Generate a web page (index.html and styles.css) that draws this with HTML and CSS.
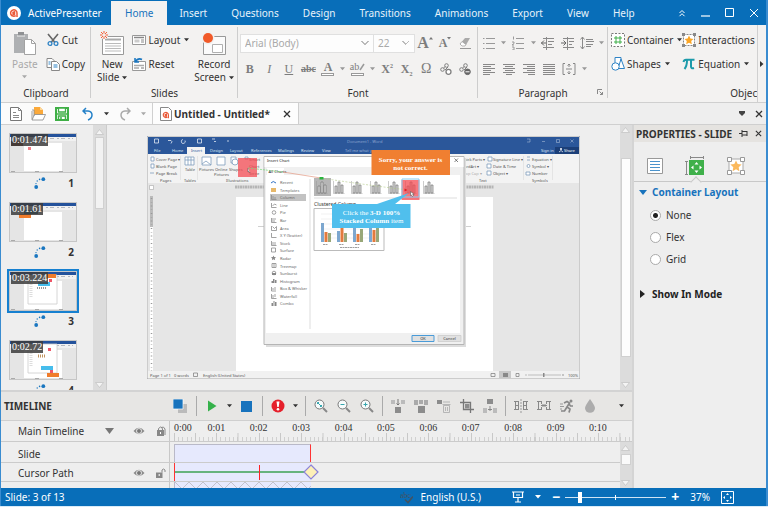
FILE: index.html
```
<!DOCTYPE html>
<html lang="en">
<head>
<meta charset="utf-8">
<title>ActivePresenter</title>
<link rel="stylesheet" href="styles.css">
</head>
<body>
<svg class="defs" aria-hidden="true">
  <symbol id="caret" viewBox="0 0 6 4"><path d="M0 0h6L3 3.500z" fill="currentColor"/></symbol>
  <symbol id="close" viewBox="0 0 8 8"><path d="M1 1l6 6M7 1L1 7" stroke="currentColor" stroke-width="1.300"/></symbol>
  <symbol id="up" viewBox="0 0 11 10"><path d="M1.500 7.500L5.500 2.500l4 5z" fill="#f4f4f4" stroke="#c4c4c4" stroke-width=".8"/></symbol>
  <symbol id="down" viewBox="0 0 11 10"><path d="M1.500 2.500L5.500 7.500l4-5z" fill="#f4f4f4" stroke="#c4c4c4" stroke-width=".8"/></symbol>
  <symbol id="path" viewBox="0 0 12 12"><g fill="#1976c0"><circle cx="2.200" cy="10" r="1.900"/><circle cx="9.300" cy="2.200" r="1.900"/><circle cx="2" cy="6.600" r=".7"/><circle cx="3.200" cy="4" r=".7"/><circle cx="5.600" cy="2.400" r=".8"/></g></symbol>
  <symbol id="eye" viewBox="0 0 12 8"><path d="M.5 4Q6-2.500 11.500 4Q6 10.500.5 4z" fill="#8b8b8b"/><circle cx="6" cy="4" r="2.800" fill="#ededed"/><circle cx="6" cy="4" r="2" fill="#777"/></symbol>
  <symbol id="a-logo" viewBox="0 0 10 10"><path d="M8 9V5a3.200 3.200 0 1 0-1.300 2.600M4 4.500l1.500-.6v2.300l-1.300.3z" fill="none" stroke="#ea5b3a" stroke-width="1.500"/></symbol>
  <symbol id="col-ico" viewBox="0 0 12 14"><path d="M.5 1v12.500h11" fill="none" stroke="#999" stroke-width=".5"/><path d="M2 6h2v7H2zM5 2h2v11H5zM8 5h2v8H8z" fill="#ddd" stroke="#777" stroke-width=".7"/></symbol>
  <symbol id="shot" viewBox="0 0 66 38">
    <path fill="#e5e5e5" d="M0 0h66v38H0z"/><path fill="#24529b" d="M0 0h66v3H0z"/><path fill="#f1f1f1" d="M0 3h66v4H0z"/><path stroke="#b4b8c0" stroke-width="1.200" stroke-dasharray="2 2 4 3" d="M36 4.500h27"/><path fill="#fff" d="M14 9h38v28H14z"/><path stroke="#aaa" stroke-dasharray="4 20" d="M1 37.500h65"/>
  </symbol>
</svg>
<div class="app">
  <header class="titlebar">
    <div class="brand"><svg width="14" height="14" viewBox="0 0 14 14"><circle cx="7" cy="7" r="7" fill="#fff"/><use href="#a-logo" x="2" y="2" width="10" height="10"/></svg><span>ActivePresenter</span></div>
    <nav class="menu">
      <a class="active" href="#home">Home</a><a href="#insert">Insert</a><a href="#questions">Questions</a><a href="#design">Design</a><a href="#transitions">Transitions</a><a href="#animations">Animations</a><a href="#export">Export</a><a href="#view">View</a><a href="#help">Help</a>
    </nav>
    <div class="window-buttons">
      <button aria-label="Collapse ribbon"><svg width="8" height="8" viewBox="0 0 8 8"><path d="M1.500 4L4 1.500 6.500 4M1.500 7.200L4 4.700l2.500 2.500" fill="none" stroke="#fff"/></svg></button>
      <button aria-label="Minimize"><svg width="9" height="9" viewBox="0 0 9 9"><path d="M0 8h9" stroke="#fff" stroke-width="1.200"/></svg></button>
      <button aria-label="Maximize"><svg width="9" height="9" viewBox="0 0 9 9"><path d="M.5.500h8v8h-8z" fill="none" stroke="#fff"/></svg></button>
      <button aria-label="Close"><svg width="10" height="10" viewBox="0 0 10 10"><path d="M1 1l8 8M9 1L1 9" stroke="#fff"/></svg></button>
    </div>
  </header>

  <section class="ribbon">
    <div class="group clipboard">
      <div class="group-body">
        <button class="big off"><svg width="24" height="24" viewBox="0 0 24 24"><path d="M1 3h14v6h-4v13H1z" fill="#aeb0b2"/><path d="M5 1h6v4H5z" fill="#8f9193"/><path d="M4 5h8" stroke="#eee"/><path d="M11.500 8.500h7l4 4v11h-11z" fill="#fff" stroke="#a3a3a3"/><path d="M18.500 8.500v4h4" fill="none" stroke="#a3a3a3"/></svg><span>Paste</span><svg class="caret"><use href="#caret"/></svg></button>
        <div class="stack">
          <button class="cmd"><svg width="14" height="14" viewBox="0 0 14 14"><path d="M2 1l7 8.500M12 1L5 9.500" stroke="#666" stroke-width="1.600"/><circle cx="4" cy="10.500" r="1.900" fill="none" stroke="#2f83c5" stroke-width="1.300"/><circle cx="10" cy="10.500" r="1.900" fill="none" stroke="#2f83c5" stroke-width="1.300"/></svg>Cut</button>
          <button class="cmd"><svg width="14" height="14" viewBox="0 0 14 14"><path d="M1 1.500h5l2 2v7H1z" fill="#fff" stroke="#888"/><path d="M5.500 4.500h5l3 3v6h-8z" fill="#fff" stroke="#888"/><path d="M2.500 5h2M2.500 7h2M7.500 8h4M7.500 10h4" stroke="#2f83c5" stroke-width="1.200"/></svg>Copy</button>
        </div>
      </div>
      <h2>Clipboard</h2>
    </div>
    <div class="group slides">
      <div class="group-body">
        <button class="big"><svg width="24" height="24" viewBox="0 0 24 24"><path d="M2.500 5.500h21v18h-21z" fill="#fff" stroke="#999"/><path d="M5 8.500h16" stroke="#aaa" stroke-width="2"/><path d="M5 12.500h16M5 15h16M5 17.500h16M5 20h16" stroke="#bbb"/><circle cx="4" cy="4" r="4" fill="#f1f0ef"/><path d="M4 0v2.500M4 5.500V8M0 4h2.500M5.500 4H8M1 1l2 2M5 5l2 2M7 1L5 3M3 5L1 7" stroke="#f4613a"/></svg><span>New</span><span>Slide<svg class="caret"><use href="#caret"/></svg></span></button>
        <div class="stack">
          <button class="cmd"><svg width="14" height="14" viewBox="0 0 14 14"><path d="M.5 2.500h13v9H.5z" fill="#fff" stroke="#999"/><path d="M2 4.500h10" stroke="#888" stroke-width="1.500"/><path d="M2.500 6.500h5v3h-5z" fill="#ccc"/><path d="M9 7h3M9 9h3" stroke="#888"/></svg>Layout<svg class="caret"><use href="#caret"/></svg></button>
          <button class="cmd"><svg width="14" height="14" viewBox="0 0 14 14"><path d="M.5 4.500h13v9H.5z" fill="#fff" stroke="#999"/><path d="M2 8.500h10M2 11h5" stroke="#aaa" stroke-width="1.500"/><path d="M9 11h3" stroke="#777"/><path d="M3 1v4h4M3 5Q6 .5 10 2.500" fill="none" stroke="#1976c0" stroke-width="1.500"/></svg>Reset</button>
        </div>
        <button class="big"><svg width="24" height="24" viewBox="0 0 24 24"><path d="M1.500 5.500h22v18h-22z" fill="#fbfbfb" stroke="#999"/><path d="M10.500 13.500h10v8h-10z" fill="#fff" stroke="#b0b0b0"/><circle cx="6" cy="7" r="6.500" fill="#f1f0ef"/><circle cx="6" cy="7" r="5" fill="#f15a29"/></svg><span>Record</span><span>Screen<svg class="caret"><use href="#caret"/></svg></span></button>
      </div>
      <h2>Slides</h2>
    </div>
    <div class="group font">
      <div class="group-body rows">
        <div class="row boxes"><select class="family" aria-label="Font family"><option>Arial (Body)</option></select><select class="size" aria-label="Font size"><option>22</option></select>
          <button class="letter grow" aria-label="Grow font">A<svg width="4" height="3" viewBox="0 0 4 3"><path d="M0 2.500h4L2 0z" fill="#777"/></svg></button>
          <button class="letter" aria-label="Shrink font">A<svg width="4" height="3" viewBox="0 0 4 3"><path d="M0 0h4L2 2.500z" fill="#777"/></svg></button>
          <button aria-label="Clear formatting"><svg width="14" height="14" viewBox="0 0 14 14"><path d="M2 8l5-6h5l-4 7H3z" fill="#aaa"/><path d="M2 8l2-2.500 4 3L7 10H4z" fill="#fff" stroke="#999" stroke-width=".7"/><path d="M2 12.500h11" stroke="#999"/></svg></button>
        </div>
        <div class="row glyphs">
          <button aria-label="Bold"><b>B</b></button><button aria-label="Italic"><i>I</i></button><button aria-label="Underline"><u>U</u></button><button aria-label="Strikethrough"><s>abc</s></button>
          <button class="inked" aria-label="Font color"><b>A</b></button><button class="drop" aria-label="Font colors"><svg class="caret"><use href="#caret"/></svg></button>
          <button class="inked pen" aria-label="Highlight"><span>ab</span><svg width="6" height="8" viewBox="0 0 6 8"><path d="M1 7l4-6" stroke="#999" stroke-width="1.500"/></svg></button><button class="drop" aria-label="Highlight colors"><svg class="caret"><use href="#caret"/></svg></button>
          <button aria-label="Superscript"><b>X<sup>2</sup></b></button><button aria-label="Subscript"><b>X<sub>2</sub></b></button><button class="omega" aria-label="Symbol">Ω</button>
          <button aria-label="Add link"><svg width="14" height="14" viewBox="0 0 14 14" fill="none" stroke="#808080"><circle cx="3.500" cy="7.500" r="1.800"/><circle cx="7.500" cy="3.500" r="1.800"/><path d="M4.500 6l1.800-1.500M6 8l3-3"/><circle cx="9.500" cy="9.800" r="2.500" fill="#fff" stroke-width="1.300"/></svg></button>
          <button aria-label="Remove link"><svg width="14" height="14" viewBox="0 0 14 14" fill="none" stroke="#808080"><circle cx="3.500" cy="7.500" r="1.800"/><circle cx="7.500" cy="3.500" r="1.800"/><path d="M4.500 6l1.800-1.500M6 8l3-3"/><circle cx="9.500" cy="9.800" r="2.800" fill="#666" stroke="#666"/><path d="M7.500 9.800h4" stroke="#fff"/></svg></button>
        </div>
      </div>
      <h2>Font</h2>
    </div>
    <div class="group paragraph">
      <div class="group-body rows">
        <div class="row">
          <button aria-label="Bullets"><svg width="14" height="14" viewBox="0 0 14 14" stroke="#999"><path d="M4 2.500h9M4 7.500h9M4 12.500h9M1 2.500h1.500M1 7.500h1.500M1 12.500h1.500"/></svg></button><button class="drop" aria-label="Bullet styles"><svg class="caret"><use href="#caret"/></svg></button>
          <button aria-label="Numbering"><svg width="14" height="14" viewBox="0 0 14 14" stroke="#999"><path d="M5 2.500h8M5 7.500h8M5 12.500h8M2.500.5v3M1 6h2v1.500l-2 1.500h2M1 11h2v3H1"  fill="none"/></svg></button><button class="drop" aria-label="Number styles"><svg class="caret"><use href="#caret"/></svg></button>
          <button aria-label="Decrease indent"><svg width="14" height="14" viewBox="0 0 14 14" stroke="#8a8a8a"><path d="M2 2.500h11M7 5.500h6M7 8.500h4M2 11.500h11M5.500 1v13" fill="none"/><path d="M0 7h5M3 4.500L.5 7 3 9.500" fill="none" stroke="#666"/></svg></button>
          <button aria-label="Increase indent"><svg width="14" height="14" viewBox="0 0 14 14" stroke="#8a8a8a"><path d="M2 2.500h11M8 5.500h5M8 8.500h3M2 11.500h11M6.500 1v13" fill="none"/><path d="M0 7h5M2.500 4.500L5 7 2.500 9.500" fill="none" stroke="#666"/></svg></button>
          <button aria-label="Line spacing"><svg width="14" height="14" viewBox="0 0 14 14" stroke="#8a8a8a"><path d="M2.500 1v12M.5 3.500l2-2.500 2 2.500M.5 10.500l2 2.500 2-2.500M6 3.500h7M6 5.500h8M6 8.500h7M6 10.500h5" fill="none"/></svg></button><button class="drop" aria-label="Spacing options"><svg class="caret"><use href="#caret"/></svg></button>
        </div>
        <div class="row">
          <button aria-label="Align left"><svg width="12" height="12" viewBox="0 0 12 12" stroke="#888"><path d="M0 1.500h12M0 3.500h8M0 5.500h12M0 7.500h8M0 9.500h12M0 11.500h7"/></svg></button>
          <button aria-label="Center"><svg width="12" height="12" viewBox="0 0 12 12" stroke="#888"><path d="M0 1.500h12M2 3.500h8M0 5.500h12M2 7.500h8M0 9.500h12M3 11.500h6"/></svg></button>
          <button aria-label="Align right"><svg width="12" height="12" viewBox="0 0 12 12" stroke="#888"><path d="M0 1.500h12M4 3.500h8M0 5.500h12M4 7.500h8M0 9.500h12M5 11.500h7"/></svg></button>
          <button aria-label="Justify"><svg width="12" height="12" viewBox="0 0 12 12" stroke="#888"><path d="M0 1.500h12M0 3.500h12M0 5.500h12M0 7.500h12M0 9.500h12M0 11.500h12"/></svg></button>
          <button aria-label="Vertical align"><svg width="14" height="14" viewBox="0 0 14 14" stroke="#888" fill="none"><path d="M3 1.500H1v11h2M11 1.500h2v11h-2M4 7h6" /><path d="M7 2v3M7 9v3M5.500 3.500L7 2l1.500 1.500M5.500 10.500L7 12l1.500-1.500"/></svg></button><button class="drop" aria-label="Vertical options"><svg class="caret"><use href="#caret"/></svg></button>
        </div>
      </div>
      <h2>Paragraph</h2>
      <button class="launcher" aria-label="Paragraph settings"><svg width="6" height="6" viewBox="0 0 6 6"><path d="M.5 5V.5H5M2.500 2.500l3 3M5.500 3v2.500H3" fill="none" stroke="#888"/></svg></button>
    </div>
    <div class="group objects">
      <div class="group-body">
        <div class="stack">
          <button class="cmd"><svg width="14" height="14" viewBox="0 0 14 14"><path d="M.5.500h13v13H.5z" fill="#fff" stroke="#777" stroke-dasharray="2 1.500"/><path d="M5 3v8M9 3v8M3 5h8M3 9h8" stroke="#3fae49"/></svg>Container<svg class="caret"><use href="#caret"/></svg></button>
          <button class="cmd"><svg width="14" height="14" viewBox="0 0 14 14" fill="#fff" stroke="#2f83c5"><path d="M4 .5h6v7H4z"/><path d="M10 2l3.500 9.500H7z"/><circle cx="4.500" cy="9.500" r="3.700"/></svg>Shapes<svg class="caret"><use href="#caret"/></svg></button>
        </div>
        <div class="stack">
          <button class="cmd"><svg width="14" height="14" viewBox="0 0 14 14"><path d="M1.500 1.500h11v11h-11z" fill="#fff" stroke="#888" stroke-dasharray="2 1"/><path d="M0 0h3v3H0zM11 0h3v3h-3zM0 11h3v3H0zM11 11h3v3h-3z" fill="#888"/><path d="M7 2.500l1.400 3 3.100.4-2.300 2.200.6 3.200L7 9.800l-2.800 1.500.6-3.200-2.300-2.200 3.100-.4z" fill="#fba524"/></svg>Interactions<svg class="caret"><use href="#caret"/></svg></button>
          <button class="cmd"><svg width="14" height="14" viewBox="0 0 14 14"><path d="M1.500 5Q2 2.800 4 2.800h8.500M5 3Q5 9 2.500 12M9 3v6.500Q9 12 12 11" fill="none" stroke="#1b9aaa" stroke-width="2"/></svg>Equation<svg class="caret"><use href="#caret"/></svg></button>
        </div>
      </div>
      <h2>Objects</h2>
    </div>
    <button class="ribbon-next" aria-label="Scroll ribbon"><svg width="4" height="6" viewBox="0 0 4 6"><path d="M0 0l3.500 3L0 6z" fill="#333"/></svg></button>
  </section>

  <section class="tabstrip">
    <div class="quick">
      <button aria-label="New"><svg width="12" height="14" viewBox="0 0 12 14"><path d="M.5.500h8l3 3v10H.5z" fill="#fff" stroke="#777"/><path d="M8.500.5v3h3M3 5.500h3M3 8.500h6M3 10.500h6" fill="none" stroke="#888"/></svg></button>
      <button aria-label="Open"><svg width="15" height="15" viewBox="0 0 15 15"><path d="M3 1h6l3 3v5H3z" fill="#fba93a"/><path d="M9 1v3h3" fill="#fdd79a"/><path d="M1 4h2v6M1 13.500V5M3.500 8.500h11l-2.500 5.500H1z" fill="#fff" stroke="#888" stroke-width=".8"/></svg></button>
      <button aria-label="Save"><svg width="14" height="14" viewBox="0 0 14 14"><path d="M1 1h12v12H1z" fill="#fff" stroke="#3faf46" stroke-width="2"/><path d="M3.500 1h7v4h-7zM2 7h10" fill="#fff" stroke="#3faf46" stroke-width="1.300"/><path d="M3.500 13V9h7v4M6 10v3" stroke="#3faf46" fill="none" stroke-width="1.500"/></svg></button>
      <button aria-label="Undo"><svg width="12" height="14" viewBox="0 0 12 14"><path d="M4 1L1 4l3 3M1.500 4H6q4 .5 4 4t-4 5" fill="none" stroke="#2380c8" stroke-width="1.500"/></svg></button>
      <button class="narrow" aria-label="Undo list"><svg class="caret"><use href="#caret"/></svg></button>
      <button aria-label="Redo"><svg width="12" height="14" viewBox="0 0 12 14"><path d="M8 1l3 3-3 3M10.500 4H6Q2 4.500 2 8t4 5" fill="none" stroke="#aaa" stroke-width="1.500"/></svg></button>
      <button class="narrow off" aria-label="Redo list"><svg class="caret"><use href="#caret"/></svg></button>
    </div>
    <div class="doc-tab"><svg width="12" height="14" viewBox="0 0 12 14"><path d="M.5.500h8l3 3v10H.5z" fill="#fff" stroke="#888"/><use href="#a-logo" x="2" y="4" width="8" height="8"/></svg><b>Untitled - Untitled*</b><button aria-label="Close tab"><svg width="8" height="8"><use href="#close"/></svg></button></div>
    <div class="strip-end"><button aria-label="Tab list"><svg width="6" height="5" viewBox="0 0 6 5"><path d="M0 0h6v2L3 5 0 2z" fill="#444"/></svg></button><button aria-label="Close all"><svg width="8" height="8"><use href="#close"/></svg></button></div>
  </section>

  <div class="workspace">
    <div class="left-side">
      <div class="editor">
        <ol class="thumbs">
          <li><div class="thumb"><svg viewBox="0 0 66 38"><use href="#shot"/><path fill="#803b20" d="M1 7h12v5H1z"/><path fill="#f07f86" d="M18 13h3v3h-3z"/></svg><time>0:01.474</time></div><div class="meta"><svg width="12" height="12"><use href="#path"/></svg><b>1</b></div></li>
          <li><div class="thumb"><svg viewBox="0 0 66 38"><use href="#shot"/><path fill="#1d6f8f" d="M14 7h14v4H14z"/><path fill="#f07c2b" d="M9 11h12v4H9z"/></svg><time>0:01.61</time></div><div class="meta"><svg width="12" height="12"><use href="#path"/></svg><b>2</b></div></li>
          <li class="selected"><div class="thumb"><svg viewBox="0 0 66 38"><use href="#shot"/><path fill="#fff" stroke="#ccc" stroke-width=".8" d="M18 3h29v29H18z"/><path stroke="#ddd" stroke-dasharray="1 1" stroke-width="3" d="M21 10v15"/><path fill="#f07c2b" d="M36 2h10v4H36z"/><path fill="#46bdec" d="M28 10h12v4H28z"/><path fill="#ee5566" d="M39 7h3v3h-3z"/><path stroke="#999" stroke-dasharray="1 1" stroke-width="2" d="M27 16h9"/></svg><time>0:03.224</time></div><div class="meta"><svg width="12" height="12"><use href="#path"/></svg><b>3</b></div></li>
          <li><div class="thumb"><svg viewBox="0 0 66 38"><use href="#shot"/><path fill="#fff" stroke="#ccc" stroke-width=".8" d="M18 3h29v29H18z"/><path stroke="#ddd" stroke-dasharray="1 1" stroke-width="3" d="M21 10v15"/><path stroke="#c2945f" stroke-dasharray="1 1" stroke-width="3" d="M28 15h7"/><path fill="#46bdec" d="M31 25h12v4H31z"/><path fill="#ee5566" d="M38 7h3v3h-3zM40 29h3v3h-3z"/><path fill="#f07c2b" d="M37 32h12v4H37z"/></svg><time>0:02.72</time></div><div class="meta"><svg width="12" height="12"><use href="#path"/></svg><b>4</b></div></li>
        </ol>
        <div class="scroll thumbs-scroll"><svg width="11" height="10"><use href="#up"/></svg><span></span><svg class="end" width="11" height="10"><use href="#down"/></svg></div>
        <div class="canvas">
          <svg class="slide" viewBox="147 135 433 243" role="img" aria-label="Slide 3">
            <path fill="#e6e6e6" d="M147 135h433v243H147z"/>
            <path fill="#2b579a" d="M147 135h433v18H147z"/>
            <path fill="#f3f3f3" d="M147 153h433v29H147z"/>
            <path fill="#f3f3f3" d="M187 146h18v7h-18z"/>
            <g fill="none" stroke="#dfe7f3" stroke-width=".8"><path d="M154.500 138h4v4h-4zM168 139.500h3q2 1 0 3M183 138.500a2 2 0 1 0 2 1M197.500 138h4v4h-4zM212 138h3M214 140.500h2M227 140h2"/><path d="M527 138h3v3h-3M542 140.500h3M556.500 138.500h3v3h-3zM570.500 138.500l3 3M573.500 138.500l-3 3" opacity=".5"/></g>
            <g class="w" fill="#dfe7f3"><text x="154" y="151">File</text><text x="172" y="151">Home</text><text x="191" y="151" fill="#2b579a">Insert</text><text x="210" y="151">Design</text><text x="230" y="151">Layout</text><text x="251" y="151">References</text><text x="278" y="151">Mailings</text><text x="301" y="151">Review</text><text x="322" y="151">View</text><text x="345" y="151" fill="#9eb4d8">Tell me what yo</text><text x="347" y="142" fill="#8ba5d0">Document1 - Word</text><text x="541" y="151">Sign in</text></g>
            <path fill="#1b3f78" d="M555 146h24v7h-24z"/><path d="M559 151q2-3 4 0" stroke="#fff" stroke-width=".7" fill="none"/><circle cx="561" cy="148" r="1" fill="#fff"/><text class="w" x="564" y="151" fill="#fff">Share</text>
            <g class="w" fill="#555"><text x="156" y="159.500">Cover Page ▾</text><text x="156" y="167">Blank Page</text><text x="156" y="174">Page Break</text><text x="160" y="181">Pages</text><text x="185" y="170">Table</text><text x="184" y="181">Tables</text><text x="199" y="170">Pictures</text><text x="215" y="170">Online</text><text x="214" y="175">Pictures</text><text x="229" y="170">Shapes</text><text x="249" y="159.500">Smart</text><text x="249" y="167">Chart</text><text x="249" y="174">Scree</text><text x="226" y="181">Illustrations</text><text x="464" y="159.500">uick Parts ▾</text><text x="464" y="167">ordArt ▾</text><text x="464" y="174" fill="#aaa">rop Cap ▾</text><text x="493" y="159.500">Signature Line ▾</text><text x="493" y="167">Date &amp; Time</text><text x="493" y="174">Object ▾</text><text x="532" y="159.500">Equation ▾</text><text x="532" y="167">Symbol ▾</text><text x="532" y="174">Number</text><text x="479" y="181">Text</text><text x="532" y="181">Symbols</text></g>
            <g fill="#fff" stroke="#7e9cbb" stroke-width=".8"><path d="M151 156h3v4h-3zM151 163h3v4h-3zM150 172h4M185 156h9v8h-9zM185 159h9M188 156v8M191 156v8M202 156h9v8h-9zM202 163l4-3 5 4M217 156h8v8h-8zM231 156h5v6h-5zM245 156h3v2h-3zM488 156h4v4h-4zM487 163h4v4h-4zM487 170h4v4h-4zM527 156h3M527 159h3M526 171h4v3h-4z"/><circle cx="235" cy="161" r="3"/><circle cx="528.500" cy="165" r="1.500"/></g>
            <path d="M180.500 155v24M197.500 155v24M523.500 155v24M552.500 155v24" stroke="#ddd" stroke-width=".7"/>
            <path d="M235 186h30M464 186h30" stroke="#b5b5b5" stroke-width="3" stroke-dasharray="2 .5"/>
            <path fill="#fff" d="M236 196h257v174H236z"/>
            <path fill="#fff" d="M150 195h3v175h-3z"/><path fill="#bbb" d="M150 195h3v31h-3z"/><path d="M151.500 197v173" stroke="#999" stroke-width="1.500" stroke-dasharray="1 3 .5 3"/><path d="M149.500 184.500h4v4h-4z" fill="#fff" stroke="#999" stroke-width=".5"/>
            <path d="M258 225.500h6M464 225.500h7" stroke="#bbb" stroke-width=".7"/>
            <path fill="#f1f1f1" d="M147 370h433v8H147z"/><g class="w" fill="#555"><text x="150" y="375.500">Page 1 of 1</text><text x="174" y="375.500">0 words</text><text x="203" y="375.500">English (United States)</text><text x="568" y="375.500">100%</text></g>
            <path d="M193.500 372h4v3.500h-4zM491 372.500h4v3h-4zM516 372.500h3v3h-3z" fill="none" stroke="#777" stroke-width=".7"/><path fill="#c8c8c8" d="M499 370h12v7h-12z"/><path fill="#888" d="M503 372h5v4h-5zM543 372h1.500v4H543z"/><path d="M525 374h2M528 374h33M562 374h2M563 373v2" stroke="#888" stroke-width=".5"/>
            <path d="M147 377.500h433" stroke="#777"/>
            <path fill="#ddd" d="M266 157h200v189H266z"/>
            <path fill="#f0f0f0" stroke="#b5b5b5" d="M264 155.500h200v188H264z"/><path fill="#fff" d="M264.500 156h199v10h-199z"/><path fill="#fff" d="M266 174h194v158H266zM267 167h17v8h-17z"/>
            <g class="w" fill="#222"><text x="267" y="161">Insert Chart</text><text x="268.500" y="172">All Charts</text></g><path d="M454.500 157.500l3.500 3.500M458 157.500l-3.500 3.500" stroke="#333" stroke-width=".6"/>
            <path fill="#c2c2c2" d="M270 193h36v7h-36z"/>
            <g class="w" fill="#666"><text x="280" y="183">Recent</text><text x="280" y="190.500">Templates</text><text x="280" y="198">Column</text><text x="280" y="205.500">Line</text><text x="280" y="213">Pie</text><text x="280" y="220.500">Bar</text><text x="280" y="228.500">Area</text><text x="280" y="236">X Y (Scatter)</text><text x="280" y="243.500">Stock</text><text x="280" y="251">Surface</text><text x="280" y="258.500">Radar</text><text x="280" y="266.500">Treemap</text><text x="280" y="274">Sunburst</text><text x="280" y="281.500">Histogram</text><text x="280" y="289">Box &amp; Whisker</text><text x="280" y="296.500">Waterfall</text><text x="280" y="304">Combo</text></g>
            <path d="M271 182q2-3 5 0" stroke="#2f71c4" fill="none"/><path fill="#e7b86a" d="M271 187h5v4h-5z"/><g fill="none" stroke="#8a8a8a" stroke-width=".8"><path d="M271.500 194v4.500h5M273 198v-3M275 198v-2M271.500 202v4.500h5M272.500 205l2-2 2 1M271.500 217v4.500h5M272 218h4M272 220h3M271.500 225v4.500h5v-4l-2 2-2-2M271.500 232v4.500h5M271.500 240v4.500h5M273 244v-3M275 244v-3M271.500 247h4v4h-4zM272 262.500h4v4h-4zM274 262.500v4M271.500 286v4h4.500M273 287v2M275 286v3M271.500 293v4.500h5M273 294v3M275 293v3"/><circle cx="274" cy="211.500" r="1.800"/><circle cx="274" cy="272" r="1.800"/></g><path fill="#888" d="M272 272h4v2h-4zM271.500 280h1.500v2h-1.500zM273 278h1.500v4H273zM275 279h1.500v3H275zM271.500 302h1.500v3h-1.500zM273.500 300h1v5h-1zM275 301h1.500v4H275zM273.500 254.500l.7 1.500 1.800.2-1.200 1.200.3 1.800-1.600-.9-1.600.9.300-1.800-1.200-1.200 1.800-.2z"/>
            <path d="M310 178v150" stroke="#ddd"/><path fill="#b6b6b6" d="M314 177h17v18h-17z"/>
            <use href="#col-ico" x="316" y="179" width="12" height="14"/><use href="#col-ico" x="333" y="179" width="12" height="14"/><use href="#col-ico" x="351" y="179" width="12" height="14"/><use href="#col-ico" x="370" y="179" width="12" height="14"/><use href="#col-ico" x="388" y="179" width="12" height="14"/><use href="#col-ico" x="405" y="179" width="12" height="14"/><use href="#col-ico" x="423" y="179" width="12" height="14"/>
            <path d="M314 197h143" stroke="#ddd"/><text class="clustered" x="314" y="204.500">Clustered Column</text>
            <path fill="#fff" stroke="#bbb" d="M314 207.500h70v42h-70z"/>
            <path d="M321 213h58M321 218h58M321 223h58M321 228h58M321 233h58M321 237h58" stroke="#e2e2e2" stroke-width=".5"/>
            <path fill="#7da7cf" d="M321 222h3v19h-3zM337 230h3v11h-3zM353 226h3v15h-3zM369 221h3v20h-3z"/><path fill="#e37a3d" d="M324.500 231h3v10h-3zM340.500 226h3v15h-3zM356.500 233h3v8h-3zM372.500 229h3v12h-3z"/><path fill="#98a778" d="M328 232h3v9h-3zM344 232h3v9h-3zM360 228h3v13h-3zM376 225h3v16h-3z"/><path d="M323 243.500h5M339 243.500h5M355 243.500h5M371 243.500h5M340 246.500h19" stroke="#888" stroke-width=".8" stroke-dasharray="2 .5"/>
            <path fill="#f44b53" fill-opacity=".75" d="M238 157h19v19h-19zM401.500 179h18v20h-18z"/><path fill="none" stroke="#86cdf3" d="M402 178h17v18h-17z"/>
            <path d="M248 167l35 4" stroke="#78d878" stroke-width=".7" stroke-dasharray="2 1"/><path d="M283 171l38 6" stroke="#e49a82" stroke-width=".7"/><path d="M321 177q45 7 87 12" fill="none" stroke="#b0c884" stroke-width=".6" stroke-dasharray="2 1.500"/><path fill="#2ab53c" d="M319.500 176h4v2.500h-4z"/><path fill="#e21a25" d="M404.500 187.500l3 1.500-3 1.500z"/>
            <path d="M248 167v4l1 -.5 1 1.500M410.500 190.500v4l1-.5 1 1.500 1-1-.8-1.200h1.500z" fill="#fff" stroke="#555" stroke-width=".6"/>
            <path fill="#50bfed" d="M332 203h45l32-11-14 11h15.500v24H332z"/><path fill="#f07f31" d="M371.500 149h78.500v25h-78.500z"/>
            <g class="callout"><text x="410.500" y="160.500">Sorry, your answer is</text><text x="410.500" y="168.500">not correct.</text><text x="371.500" y="213.500"><tspan font-weight="400">Click the</tspan> 3-D 100%</text><text x="371.500" y="221.500">Stacked Column <tspan font-weight="400">item</tspan></text></g>
            <g class="w" fill="#333" text-anchor="middle"><path fill="#e1e1e1" stroke="#4a9bd8" d="M412 334.500h22v6h-22z"/><text x="423" y="339">OK</text><path fill="#e1e1e1" stroke="#c9c9c9" stroke-width=".7" d="M438 334.500h23v6h-23z"/><text x="449.500" y="339">Cancel</text></g>
            <path fill="none" stroke="#ccc" d="M147.500 135.500h432v242h-432z"/>
          </svg>
        </div>
        <div class="scroll canvas-scroll"><svg width="11" height="10"><use href="#up"/></svg><span></span><svg class="end" width="11" height="10"><use href="#down"/></svg></div>
      </div>

      <section class="timeline">
        <div class="tools">
          <h2>TIMELINE</h2>
          <button class="layers" aria-label="Layers"><svg width="14" height="14" viewBox="0 0 14 14"><path fill="#bbb" d="M5 5h9v9H5z"/><path fill="#1873bd" stroke="#fff" stroke-width=".7" d="M0 0h10v10H0z"/></svg></button><hr>
          <button aria-label="Play"><svg width="10" height="12" viewBox="0 0 10 12"><path d="M1 .5L9.500 6 1 11.500z" fill="#35b14a"/></svg></button><button class="narrow" aria-label="Play options"><svg class="caret"><use href="#caret"/></svg></button><button aria-label="Stop"><svg width="11" height="11"><path fill="#1873bd" d="M0 0h11v11H0z"/></svg></button><hr>
          <button aria-label="Record"><svg width="14" height="14" viewBox="0 0 14 14"><circle cx="7" cy="7" r="6.500" fill="#e5202b"/><path d="M5.500 2.500h3L7.700 8H6.300z" fill="#fff"/><circle cx="7" cy="10.200" r="1.300" fill="#fff"/></svg></button><button class="narrow" aria-label="Record options"><svg class="caret"><use href="#caret"/></svg></button><hr>
          <button aria-label="Zoom to fit"><svg width="14" height="14" viewBox="0 0 14 14"><circle cx="5.500" cy="5.500" r="4.500" fill="#f7fbfb" stroke="#777"/><path d="M9 9l4 4" stroke="#888" stroke-width="2"/><path d="M3.500 3.500l4 4M3.500 5V3.500H5M6 7.500h1.500V6" stroke="#35a5ad" fill="none"/></svg></button><button aria-label="Zoom out"><svg width="14" height="14" viewBox="0 0 14 14"><circle cx="5.500" cy="5.500" r="4.500" fill="#f7fbfb" stroke="#777"/><path d="M9 9l4 4" stroke="#888" stroke-width="2"/><path d="M3.500 5.500h4" stroke="#35a5ad"/></svg></button><button aria-label="Zoom in"><svg width="14" height="14" viewBox="0 0 14 14"><circle cx="5.500" cy="5.500" r="4.500" fill="#f7fbfb" stroke="#777"/><path d="M9 9l4 4" stroke="#888" stroke-width="2"/><path d="M3.500 5.500h4M5.500 3.500v4" stroke="#35a5ad"/></svg></button><hr>
          <button aria-label="Insert time"><svg width="14" height="14" viewBox="0 0 14 14"><path fill="#bbb" d="M0 1h4v4H0zM10 1h4v4h-4z"/><path d="M7 0v6M5.500 4.500L7 6l1.500-1.500" stroke="#777" fill="none"/><path fill="#8c8c8c" d="M4 8h6v6H4z"/></svg></button><button aria-label="Insert range"><svg width="14" height="14" viewBox="0 0 14 14"><path fill="#aaa" d="M0 1h4v5H0zM5 1h4v4H5zM10 1h4v5h-4z"/><path fill="#8c8c8c" d="M4 7h7v7H4z"/></svg></button><button aria-label="Delete range"><svg width="14" height="14" viewBox="0 0 14 14"><path fill="#8c8c8c" d="M0 1h5v4H0z"/><path d="M6 3h7M6.500 6.500h6v7h-6zM5.500 5.500h8M8.500 8v4M10.500 8v4" stroke="#aaa" fill="none" stroke-width=".8"/></svg></button><button aria-label="Crop"><svg width="14" height="14" viewBox="0 0 14 14"><path d="M3.500 0v10.500H14M0 3.500h10.500V14" fill="none" stroke="#777" stroke-width="1.300"/><path fill="#8c8c8c" d="M5 5h4.500v4.500H5z"/></svg></button><button aria-label="Insert frame"><svg width="14" height="14" viewBox="0 0 14 14"><path fill="#8c8c8c" d="M4 0h6v5H4z"/><path fill="#bbb" d="M0 9h4v5H0zM10 9h4v5h-4z"/><path d="M5 10.500h4M7 7v5" stroke="#888"/></svg></button><hr>
          <button aria-label="Split"><svg width="14" height="14" viewBox="0 0 14 14"><path d="M0 2.500h5M1.500 2v9M4.500 2v9M0 10.500h5M2 6.500h2M9 2.500h5M9.500 2v9M12.500 2v9M9 10.500h5M10 6.500h2" stroke="#888"/><path d="M7 0v14" stroke="#999" stroke-dasharray="2 1"/></svg></button><button aria-label="Join"><svg width="14" height="14" viewBox="0 0 14 14"><path d="M0 2.500h5M1.500 2v9M0 10.500h5M4.500 2v3M4.500 8v3M9 2.500h5M12.500 2v9M9 10.500h5M9.500 2v3M9.500 8v3M4 6.500h6M6 5v3M8 5v3" stroke="#888"/></svg></button><button aria-label="Speed"><svg width="14" height="14" viewBox="0 0 14 14"><circle cx="11" cy="2" r="1.500" fill="#888"/><path d="M4 4l3-1.500 2.500 1.500-2.500 4 3 2-1 3.500M7 8L4.500 12H1M9 5l1.500 2H13" fill="none" stroke="#888" stroke-width="1.700"/><path d="M0 5h3M0 7.500h4M0 10h2" stroke="#999"/></svg></button><button aria-label="Blur"><svg width="10" height="14" viewBox="0 0 10 14"><path d="M5 0Q10 7 10 9a5 4.800 0 0 1-10 0Q0 7 5 0z" fill="#acacac"/></svg></button>
          <button class="narrow more" aria-label="More tools"><svg class="caret"><use href="#caret"/></svg></button>
        </div>
        <div class="tracks">
          <div class="track ruler-row"><div class="name"><span>Main Timeline</span><svg class="pick" width="9" height="6" viewBox="0 0 9 6"><path d="M0 0h9L4.500 6z" fill="#777"/></svg><svg width="12" height="8"><use href="#eye"/></svg><svg width="10" height="10" viewBox="0 0 10 10"><path d="M2.500 4V2.500Q4.500-.5 6.500 2.500V4M5 1.500q3-1.500 4 1.500v6" fill="none" stroke="#888"/><path d="M1 4h7v6H1z" fill="#888"/><path d="M4.500 6v2" stroke="#fff"/></svg></div>
            <div class="ruler"><span>0:00</span><span>0:01</span><span>0:02</span><span>0:03</span><span>0:04</span><span>0:05</span><span>0:06</span><span>0:07</span><span>0:08</span><span>0:09</span><span>0:10</span></div></div>
          <div class="track slide-row"><div class="name"><span>Slide</span></div><div class="lane"><div class="clip slide-clip"></div></div></div>
          <div class="track"><div class="name"><span>Cursor Path</span><svg width="12" height="8"><use href="#eye"/></svg><svg width="10" height="10" viewBox="0 0 10 10"><path d="M0 4.500h6.500V10H0z" fill="#888"/><path d="M6 4.500V2q1.500-2 3 0v2" fill="none" stroke="#888"/><path d="M3.200 6v2" stroke="#fff"/></svg></div><div class="lane"><div class="clip path-clip"><i></i></div><svg class="diamond" width="16" height="16" viewBox="0 0 16 16"><path d="M8 1l7 7-7 7-7-7z" fill="#fdf0b8" stroke="#8b83d9" stroke-width="1.200"/></svg></div></div>
          <div class="track last"><div class="name"></div><div class="lane"><div class="clip"><svg width="100%" height="6"><defs><pattern id="cross" width="14" height="14" patternUnits="userSpaceOnUse"><path d="M0 0l14 14M14 0L0 14" stroke="#c2c2cc"/></pattern></defs><path d="M0 0h456v6H0z" fill="url(#cross)"/></svg></div></div></div>
          <div class="scroll track-scroll"><svg width="11" height="12"><use href="#up"/></svg><span></span><svg class="end" width="11" height="10"><use href="#down"/></svg></div>
        </div>
      </section>
    </div>

    <aside class="properties">
      <header><h2>PROPERTIES - SLIDE</h2><button aria-label="Pin"><svg width="9" height="7" viewBox="0 0 9 7"><path d="M0 3.500h3M3 0v7M3 1.500h5M3 5h5M8 1v5" stroke="#333" fill="none"/></svg></button><button aria-label="Close panel"><svg width="7" height="7"><use href="#close"/></svg></button></header>
      <div class="prop-tabs">
        <button aria-label="Properties"><svg width="16" height="16" viewBox="0 0 16 16"><path d="M.5.500h15v15H.5z" fill="#fff" stroke="#999"/><path d="M3 3.500h10M3 6.500h10M3 9.500h10M3 12.500h10" stroke="#4b93cc"/></svg></button>
        <button class="current" aria-label="Size and layout"><svg width="20" height="20" viewBox="0 0 20 20"><path d="M5 1.500h14M5.500 0v3M18.500 0v3M1.500 5v13M0 5.500h3M0 18.500h3" stroke="#888"/><path fill="#3fb04a" d="M4 4h15v15H4z"/><path d="M11.500 6l2 2.500h-4zM11.500 17l2-2.500h-4zM6 11.500l2.500 2v-4zM17 11.500l-2.500 2v-4z" fill="#fff"/></svg></button>
        <button aria-label="Interactivity"><svg width="18" height="18" viewBox="0 0 18 18"><path d="M2 2h14v14H2z" fill="#fff" stroke="#aaa"/><path d="M.5.500h4v4h-4zM13.500.500h4v4h-4zM.5 13.500h4v4h-4zM13.500 13.500h4v4h-4z" fill="#fff" stroke="#999"/><path d="M9 3.500l1.700 3.600 3.900.5-2.900 2.700.7 3.900L9 12.300l-3.400 1.900.7-3.900-2.900-2.700 3.900-.5z" fill="#fbb95d"/></svg></button>
      </div>
      <details class="section" open>
        <summary><svg width="8" height="5" viewBox="0 0 8 5"><path d="M0 0h8L4 5z" fill="#1873bd"/></svg>Container Layout</summary>
        <label><input type="radio" name="layout" checked>None</label>
        <label><input type="radio" name="layout">Flex</label>
        <label><input type="radio" name="layout">Grid</label>
      </details>
      <details class="section mode">
        <summary><svg width="8" height="8" viewBox="0 0 8 8"><path d="M1 0v8l5-4z" fill="#222"/></svg>Show In Mode</summary>
      </details>
    </aside>
  </div>

  <footer class="status">
    <span>Slide: 3 of 13</span>
    <div class="status-tools">
      <button class="language"><svg width="13" height="13" viewBox="0 0 13 13"><text x="0" y="7" font-size="8">abc</text><path d="M5 8.500l3 3 5-6" fill="none" stroke="#44535f" stroke-width="1.600"/></svg>English (U.S.)</button>
      <button aria-label="Preview"><svg width="12" height="12" viewBox="0 0 12 12"><path d="M0 1h12M1.500 1v5.500h9V1M6 7v4M3 11h6M4 4h4" fill="none" stroke="#fff" stroke-width="1.200"/></svg></button>
      <button aria-label="Preview options"><svg width="6" height="4"><use href="#caret"/></svg></button>
      <div class="zoom"><button aria-label="Zoom out">−</button><input type="range" min="0" max="100" value="13" aria-label="Zoom"><button aria-label="Zoom in">+</button></div>
      <span class="percent">37%</span>
      <button aria-label="Fit to window"><svg width="13" height="13" viewBox="0 0 13 13"><path d="M.5.500h12v12H.5z" fill="none" stroke="#fff"/><path d="M6.500 2l1.500 2H5zM6.500 11L8 9H5zM2 6.500L4 8V5zM11 6.500L9 8V5z" fill="#fff"/></svg></button>
    </div>
  </footer>
</div>
</body>
</html>
```
FILE: styles.css
```
* { box-sizing: border-box; }
html, body { height: 100%; }
body { margin: 0; background: #d9ebf8; font: 10px/14px "Noto Sans", sans-serif; color: #333; }
h2, ol { margin: 0; padding: 0; font-size: 10px; list-style: none; }
button { display: flex; align-items: center; justify-content: center; padding: 0; border: 0; background: none; font: inherit; color: inherit; }
svg { display: block; flex: none; }
hr { width: 1px; height: 20px; margin: 0 3px 0 4px; border: 0; background: #aaa; }
.defs { position: absolute; width: 0; height: 0; }
.caret { display: inline-block; width: 5px; height: 4px; color: #333; }
.off, .off .caret { color: #a9a9a9; }

.app { display: flex; flex-direction: column; height: calc(100vh - 1px); overflow: hidden; border: solid #3a8cd0; border-width: 0 2px 0 1px; background: #eee; }

.titlebar { display: flex; flex: none; height: 25px; background: #086eb9; color: #fff; }
.brand { display: flex; align-items: center; gap: 7px; width: 110px; padding-left: 6px; }
.menu { display: flex; flex: 1; padding-top: 1px; }
.menu a { display: flex; align-items: center; padding: 0 12px; color: #e7f2fa; text-decoration: none; }
.menu .active { padding: 0 14px; background: #f3f2f1; color: #1873bd; }
.window-buttons { display: flex; align-items: center; gap: 15px; padding-right: 7px; }

.ribbon { display: grid; flex: none; grid-template-columns: 90px 147px 240px 130px 1fr 9px; height: 78px; border-bottom: 1px solid #cfcfcf; background: #f3f2f1; }
.group { position: relative; display: flex; flex-direction: column; justify-content: space-between; min-width: 0; padding: 6px 0 2px; overflow: hidden; }
.group:not(.objects)::after { content: ""; position: absolute; right: 0; top: 2px; bottom: 4px; width: 1px; background: #cdcdcd; }
.group h2 { font-weight: 400; text-align: center; }
.group-body { display: flex; align-items: flex-start; }
.big { flex-direction: column; line-height: 13px; }
.big > span { display: flex; align-items: center; gap: 3px; }
.big > svg:first-child { margin-bottom: 3px; }
.big > .caret { margin-top: 4px; }
.stack { display: flex; flex-direction: column; gap: 8px; padding-top: 1px; }
.cmd { gap: 2px; height: 16px; white-space: nowrap; justify-content: flex-start; }
.cmd .caret { margin-left: 2px; }
.clipboard .group-body { gap: 8px; padding-left: 11px; }
.slides .group-body { gap: 5px; padding-left: 6px; }
.slides .stack { flex: 1; }
.slides .big:last-child { padding-right: 5px; }
.rows { flex-direction: column; gap: 4px; padding-top: 1px; }
.row { display: flex; align-items: center; align-self: stretch; height: 22px; }
.row .caret { color: #999; }
.row button { flex: 1; }
.row button.drop { flex: 0 0 10px; }
.font .group-body { padding-left: 2px; padding-right: 3px; }
.letter { align-items: flex-start; font: 700 12px/20px "Liberation Serif", serif; color: #7d7d7d; }
.letter svg { margin-top: 4px; }
.grow { font-size: 16px; }
select { appearance: none; height: 19px; margin: 0; padding: 0 4px; border: 1px solid #e0e0e0; border-radius: 0; color: #a9a9a9; font: inherit; background: linear-gradient(45deg, transparent 50%, #bbb 50% 66%, transparent 66%) right 8px center / 4px 4px no-repeat, linear-gradient(-45deg, transparent 50%, #bbb 50% 66%, transparent 66%) right 4px center / 4px 4px no-repeat, #fdfdfd; opacity: 1; }
.family { width: 134px; }
.size { width: 42px; margin-left: -1px; }
.glyphs { font: 12px/16px "Liberation Serif", serif; color: #7d7d7d; }
.glyphs s { font-size: 10px; font-weight: 700; }
.glyphs sup, .glyphs sub { font-size: 6px; line-height: 0; }
.glyphs .omega { font-size: 14px; }
.glyphs .inked { height: 14px; padding-bottom: 4px; background: linear-gradient(#fff, #fff) 50% 12px / 11px 1px no-repeat, linear-gradient(#999, #999) 50% 100% / 13px 3px no-repeat; }
.glyphs .pen { font-size: 10px; }
.paragraph .group-body { padding: 1px 1px 0; }
.paragraph .row:last-child button:not(.drop) { flex: 0 0 20px; }
.launcher { position: absolute; right: 5px; bottom: 7px; }
.objects .group-body { padding-left: 3px; }
.objects h2 { width: 280px; }
.ribbon-next { border-left: 1px solid #d0d0d0; }

.tabstrip { display: flex; flex: none; height: 22px; border-bottom: 1px solid #cfcfcf; background: #eee; }
.quick { display: flex; align-items: center; width: 152px; padding-left: 3px; background: #fbfbfb; border-right: 1px solid #d0d0d0; }
.quick button { width: 23px; }
.quick button:nth-child(4) { margin-left: 3px; }
.quick .narrow { width: 14px; }
.doc-tab { display: flex; align-items: center; gap: 2px; width: 146px; padding: 0 7px; background: #fdfdfd; border-right: 1px solid #cfcfcf; white-space: nowrap; }
.doc-tab button { margin-left: auto; }
.strip-end { display: flex; align-items: center; gap: 10px; margin-left: auto; padding-right: 3px; }

.workspace { display: flex; flex: 1; min-height: 0; }
.left-side { display: flex; flex: 1; flex-direction: column; min-width: 0; }
.editor { display: flex; flex: 1; min-height: 0; border-bottom: 2px solid #d3d3d3; }
.thumbs { flex: none; width: 92px; padding: 8px 0 0 8px; overflow: hidden; }
.thumbs li { width: 68px; height: 69px; }
.thumb { position: relative; height: 40px; border: 1px solid #c6c6c6; }
.thumb svg { width: 100%; height: 38px; }
.selected .thumb { outline: 2px solid #1680d0; }
.thumb time { position: absolute; left: 1px; top: 0; padding: 0 1px; background: rgba(60, 60, 60, .85); color: #fff; font: 10px/12px "Liberation Serif", serif; }
.meta { display: flex; justify-content: space-between; align-items: center; padding: 3px 3px 0 25px; }
.scroll { display: flex; flex: none; flex-direction: column; width: 12px; background: #dcdcdc; }
.scroll span { margin: 0 1px; border: 1px solid #d0d0d0; background: #f2f2f2; }
.scroll .end { margin-top: auto; }
.thumbs-scroll { width: 14px; padding: 2px 1px 0; border-right: 1px solid #ccc; }
.thumbs-scroll span { height: 72px; }
.canvas { display: flex; flex: 1; align-items: center; justify-content: center; min-width: 0; padding: 0 40px; }
.slide { width: 100%; max-height: 100%; }
.w { font: 4px "Noto Sans", sans-serif; }
.clustered { font: 5px "Noto Sans", sans-serif; fill: #333; }
.callout { font: 700 7px "Liberation Serif", serif; fill: #fff; text-anchor: middle; }
.canvas-scroll span { flex: 1; margin-top: 23px; margin-bottom: 23px; background: #fdfdfd; }

.timeline { position: relative; flex: none; }
.tools { display: flex; align-items: center; height: 29px; padding-right: 5px; background: #e7e6e4; border-bottom: 1px solid #cfcfcf; }
.tools h2 { width: 167px; padding-left: 3px; }
.tools button { width: 23px; }
.tools .layers { width: 24px; }
.tools .narrow { width: 12px; }
.tools .more { margin-left: auto; }
.tracks { position: relative; }
.track { display: flex; height: 19px; border-bottom: 1px solid #cbcbcb; }
.name { display: flex; flex: none; align-items: center; gap: 11px; width: 169px; padding: 2px 3px 0 17px; border-right: 1px solid #c8c8c8; }
.name span { margin-right: auto; }
.ruler-row, .slide-row { height: 21px; }
.ruler-row .name { padding-top: 0; }
.slide-row .name { padding-top: 4px; }
.pick { margin-right: 8px; }
.ruler { display: grid; flex: 1; grid-template-columns: repeat(10, 5fr) 4fr; margin-left: 4px; font: 10px/14px "Liberation Serif", serif; }
.ruler span { display: flex; height: 20px; background: linear-gradient(90deg, #c8c8c8 1px, transparent 1px) 0 100% / 50% 8px repeat-x, repeating-linear-gradient(90deg, #d0d0d0 0 1px, transparent 1px 10%) 0 100% / 100% 4px no-repeat; text-indent: -9px; }
.ruler span:first-child { text-indent: 0; }
.ruler span:last-child { background: linear-gradient(90deg, #c8c8c8 1px, transparent 1px) 0 100% / 63% 8px repeat-x, repeating-linear-gradient(90deg, #d0d0d0 0 1px, transparent 1px 13%) 0 100% / 100% 4px no-repeat; }
.lane { position: relative; flex: 1; margin-left: 4px; }
.clip { width: 30%; height: 100%; background: #e6e9fd; border-left: 1px solid #b9b9c8; }
.slide-clip { margin-top: 2px; height: calc(100% - 2px); border-top: 1px solid #b9b9c8; border-right: 1px solid #f33; }
.path-clip { display: flex; align-items: center; background: linear-gradient(#67b37e, #67b37e) 0 50% / 100% 2px no-repeat, #e6e9fd; border-left: 1px solid #f33; }
.path-clip i { width: 62%; height: 15px; border-right: 1px solid #f22; }
.diamond { position: absolute; left: 30%; top: 1px; margin-left: -8px; }
.last { height: 6px; border: 0; overflow: hidden; }
.track-scroll { position: absolute; right: 0; top: 21px; bottom: 0; }
.track-scroll span { height: 11px; background: #fafafa; }

.properties { flex: none; width: 134px; border-left: 2px solid #d4d4d4; }
.properties header { display: flex; align-items: center; gap: 7px; height: 17px; padding: 0 5px 0 2px; background: #e5e3e0; }
.properties h2 { margin-right: auto; white-space: nowrap; }
.prop-tabs { display: flex; justify-content: space-between; align-items: center; height: 40px; padding: 8px 21px 0 13px; border-bottom: 1px solid #c8c8c8; }
.current { position: relative; }
.current::after { content: ""; position: absolute; left: 7px; bottom: -10px; width: 7px; height: 7px; transform: rotate(45deg); border: solid #c8c8c8; border-width: 1px 0 0 1px; background: #eee; }
.section { padding-top: 3px; }
summary { display: flex; align-items: center; gap: 5px; height: 14px; padding-left: 5px; font-weight: 700; color: #1873bd; list-style: none; }
.section label { display: flex; align-items: center; gap: 5px; height: 22px; padding-left: 16px; }
.section summary + label { margin-top: 5px; }
.mode { padding-top: 17px; }
.mode summary { color: #222; }
input[type="radio"] { appearance: none; width: 11px; height: 11px; margin: 0; border: 1px solid #aaa; border-radius: 50%; background: #fff; }
input[type="radio"]:checked { background: radial-gradient(#222 0 2px, #fff 3px); }

.status { display: flex; flex: none; align-items: center; justify-content: space-between; height: 18px; padding: 0 32px 0 4px; background: #086eb9; color: #fff; }
.status > span { line-height: 16px; }
.status-tools { display: flex; align-items: center; gap: 11px; }
.status-tools use { color: #fff; }
.language { gap: 8px; margin-right: 20px; }
.language text { font-family: "Liberation Serif", serif; fill: #44535f; }
.zoom { display: flex; align-items: center; gap: 5px; font-size: 14px; font-weight: 700; line-height: 14px; }
input[type="range"] { appearance: none; width: 101px; height: 14px; margin: 0; background: linear-gradient(#fff, #fff) 50% 50% / 1px 5px no-repeat, linear-gradient(#cfe4f4, #cfe4f4) 0 50% / 100% 1px no-repeat; }
input[type="range"]::-webkit-slider-thumb { appearance: none; width: 4px; height: 11px; border: 0; border-radius: 0; background: #fff; }
```
